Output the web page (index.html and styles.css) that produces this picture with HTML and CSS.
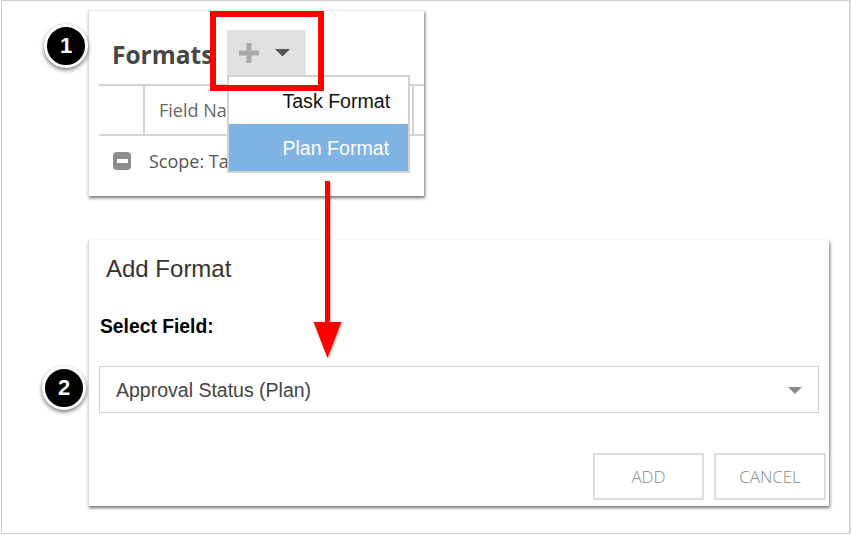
FILE: index.html
```html
<!DOCTYPE html>
<html>
<head>
<meta charset="utf-8">
<link rel="stylesheet" href="styles.css">
</head>
<body>
<div class="frame">
  <section class="panel formats">
    <div class="formats-head">
      <h2 class="formats-title">Formats</h2>
      <div class="add-wrap">
        <button class="add-btn" type="button">
          <svg class="plus" width="20" height="20" viewBox="0 0 20 20"><rect x="7.5" y="0" width="5" height="20" fill="#a9a9a9"/><rect x="0" y="7.5" width="20" height="5" fill="#a9a9a9"/></svg>
          <svg class="caret" width="15" height="8" viewBox="0 0 15 8"><path d="M0 0 H15 L7.5 7.5 Z" fill="#555"/></svg>
        </button>
        <ul class="menu">
          <li class="menu-item">Task Format</li>
          <li class="menu-item active">Plan Format</li>
        </ul>
      </div>
    </div>
    <div class="table-wrap">
      <div class="trow thead">
        <div class="cell c1"></div>
        <div class="cell c2">Field Name</div>
        <div class="cell c3"></div>
      </div>
      <div class="trow tbody">
        <div class="scope">
          <span class="minus"><span class="minus-bar"></span></span>
          <span class="scope-text">Scope: Task</span>
        </div>
      </div>
    </div>
  </section>

  <section class="panel addformat">
    <h2 class="af-title">Add Format</h2>
    <label class="af-label">Select Field:</label>
    <div class="select">
      <span class="select-text">Approval Status (Plan)</span>
      <svg class="select-caret" width="14" height="7" viewBox="0 0 14 7"><path d="M0 0 H14 L7 7 Z" fill="#8a8a8a"/></svg>
    </div>
    <div class="actions">
      <button class="btn" type="button">ADD</button>
      <button class="btn" type="button">CANCEL</button>
    </div>
  </section>

  <div class="badge badge-1">1</div>
  <div class="badge badge-2">2</div>
  <div class="highlight"></div>
  <svg class="arrow" width="40" height="184" viewBox="0 0 40 184">
    <defs>
      <filter id="sh" x="-50%" y="-10%" width="200%" height="120%">
        <feDropShadow dx="1" dy="1" stdDeviation="1" flood-color="#000" flood-opacity="0.3"/>
      </filter>
    </defs>
    <g filter="url(#sh)">
      <rect x="15" y="3" width="5" height="144" fill="#ff0000"/>
      <path d="M3.5 144 H31.5 L17.5 180 Z" fill="#ff0000"/>
    </g>
  </svg>
</div>
</body>
</html>
```
FILE: styles.css
```css
* { box-sizing: border-box; }
html, body { margin: 0; padding: 0; background: #fff; }
body { font-family: "Liberation Sans", Arial, sans-serif; }

.frame {
  position: relative;
  margin-left: 1px;
  width: 849px;
  height: 534px;
  border: 1px solid #cfcfcf;
  box-shadow: 1px 1px 1px rgba(0,0,0,0.12);
  padding: 9px 0 0 86px;
  overflow: hidden;
}

.panel { background: #fff; }

.formats {
  width: 336px;
  height: 186px;
  border-left: 1px solid #dcdcdc;
  border-top: 1px solid #ececec;
  box-shadow: 1px 2px 3px rgba(0,0,0,0.55);
  display: flex;
  flex-direction: column;
}

.formats-head {
  display: flex;
  align-items: center;
  gap: 14px;
  padding: 19px 0 0 23px;
  height: 64px;
}
.formats-title {
  margin: 0;
  padding-top: 4px;
  font-family: "Open Sans", sans-serif;
  font-weight: 700;
  font-size: 24.5px;
  color: #464646;
  line-height: 45px;
}
.add-wrap { position: relative; }
.add-btn {
  width: 79px;
  height: 45px;
  border: 0;
  margin: 0;
  padding: 0 0 0 12px;
  background: #e1e1e1;
  display: flex;
  align-items: center;
  gap: 16px;
}
.plus { display: block; }
.caret { display: block; margin-top: 1px; }

.menu {
  position: absolute;
  top: 100%;
  left: 0;
  z-index: 3;
  margin: 0;
  padding: 0;
  list-style: none;
  width: 183px;
  border: 2px solid #d2d2d2;
  background: #fff;
}
.menu-item {
  height: 47px;
  line-height: 48px;
  padding-left: 53px;
  font-size: 19.6px;
  color: #111;
}
.menu-item.active {
  background: #7fb3e3;
  color: #fff;
}

.table-wrap {
  margin: 9px 0 0 10px;
  overflow: hidden;
  flex: 1;
}
.trow { display: flex; width: 500px; }
.thead {
  border-top: 2px solid #d3d3d3;
  border-bottom: 2px solid #d3d3d3;
  height: 52px;
}
.cell {
  font-family: "Open Sans", sans-serif;
  font-size: 18px;
  color: #666;
  line-height: 48px;
  white-space: nowrap;
}
.c1 { width: 46px; border-right: 2px solid #d3d3d3; }
.c2 { width: 269px; padding-left: 14px; border-right: 2px solid #d3d3d3; }
.c3 { padding-left: 14px; }

.tbody { height: 49px; }
.scope {
  display: flex;
  align-items: center;
  gap: 18px;
  padding: 1px 0 0 14px;
}
.minus {
  width: 18px;
  height: 18px;
  border-radius: 4px;
  background: #8c8c8c;
  display: flex;
  align-items: center;
  justify-content: center;
}
.minus-bar { width: 11px; height: 4px; background: #fff; }
.scope-text {
  font-family: "Open Sans", sans-serif;
  font-size: 18px;
  color: #555;
  line-height: 48px;
}

.addformat {
  margin-top: 44px;
  width: 741px;
  height: 266px;
  border-left: 1px solid #dcdcdc;
  box-shadow: 1px 2px 3px rgba(0,0,0,0.55);
  padding: 15px 3px 0 0;
  display: flex;
  flex-direction: column;
}
.af-title {
  margin: 0 0 0 17px;
  font-weight: 400;
  font-size: 24px;
  line-height: 28px;
  color: #333;
}
.af-label {
  margin: 33px 0 0 11px;
  font-weight: 700;
  font-size: 19.3px;
  line-height: 22px;
  color: #000;
}
.select {
  margin: 28px 0 0 10px;
  width: 720px;
  height: 47px;
  border: 1px solid #cfcfcf;
  display: flex;
  align-items: center;
  justify-content: space-between;
  padding: 1px 16px 0 16px;
}
.select-text { font-size: 19.5px; color: #444; }
.select-caret { display: block; }

.actions {
  margin-top: 40px;
  display: flex;
  justify-content: flex-end;
  gap: 10px;
}
.btn {
  width: 111px;
  height: 47px;
  margin: 0;
  border: 2px solid #dcdcdc;
  background: #fff;
  font-family: "Open Sans", sans-serif;
  font-weight: 300;
  font-size: 17px;
  color: #888;
  padding: 0;
}
.btn + .btn { width: 112px; }

.badge {
  position: absolute;
  width: 44px;
  height: 44px;
  border-radius: 50%;
  background: #000;
  border: 3px solid #fff;
  box-shadow: 0 2px 4px rgba(0,0,0,0.55);
  color: #fff;
  font-weight: 700;
  font-size: 22px;
  line-height: 38px;
  text-align: center;
  z-index: 4;
}
.badge-1 { left: 42px; top: 23px; }
.badge-2 { left: 40px; top: 365px; }

.highlight {
  position: absolute;
  left: 208px;
  top: 10px;
  width: 114px;
  height: 80px;
  border: 6px solid #ff0000;
  z-index: 5;
}

.arrow {
  position: absolute;
  left: 308px;
  top: 177px;
  z-index: 5;
}
```
